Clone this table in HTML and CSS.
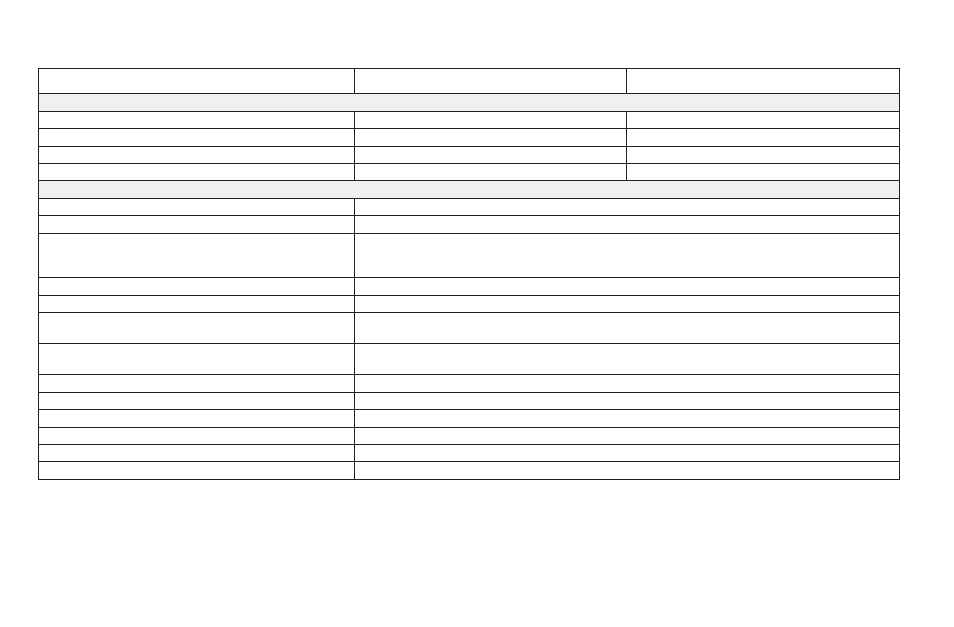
FILE: index.html
```html
<!DOCTYPE html>
<html>
<head>
<meta charset="utf-8">
<link rel="stylesheet" href="styles.css">
</head>
<body>
<div class="page">
  <div class="sheet">
    <div class="cell"></div><div class="cell"></div><div class="cell"></div>
    <div class="cell section"></div>
    <div class="cell"></div><div class="cell"></div><div class="cell"></div>
    <div class="cell"></div><div class="cell"></div><div class="cell"></div>
    <div class="cell"></div><div class="cell"></div><div class="cell"></div>
    <div class="cell"></div><div class="cell"></div><div class="cell"></div>
    <div class="cell section"></div>
    <div class="cell"></div><div class="cell wide"></div>
    <div class="cell"></div><div class="cell wide"></div>
    <div class="cell"></div><div class="cell wide"></div>
    <div class="cell"></div><div class="cell wide"></div>
    <div class="cell"></div><div class="cell wide"></div>
    <div class="cell"></div><div class="cell wide"></div>
    <div class="cell"></div><div class="cell wide"></div>
    <div class="cell"></div><div class="cell wide"></div>
    <div class="cell"></div><div class="cell wide"></div>
    <div class="cell"></div><div class="cell wide"></div>
    <div class="cell"></div><div class="cell wide"></div>
    <div class="cell"></div><div class="cell wide"></div>
    <div class="cell"></div><div class="cell wide"></div>
  </div>
</div>
</body>
</html>
```
FILE: styles.css
```css
html, body {
  margin: 0;
  padding: 0;
  background: #ffffff;
  font-family: "Liberation Sans", Arial, sans-serif;
}
.page {
  padding: 68px 0 0 38px;
}
.sheet {
  display: grid;
  width: 860px;
  grid-template-columns: 315px 271px 272px;
  grid-template-rows: 24px 17px 16px 17px 16px 16px 17px 16px 17px 43px 17px 16px 30px 30px 17px 16px 17px 16px 16px 17px;
  gap: 1px;
  padding: 1px;
  background: #231f20;
}
.cell {
  background: #ffffff;
}
.section {
  grid-column: 1 / 4;
  background: #eff0ef;
}
.wide {
  grid-column: 2 / 4;
}
```
